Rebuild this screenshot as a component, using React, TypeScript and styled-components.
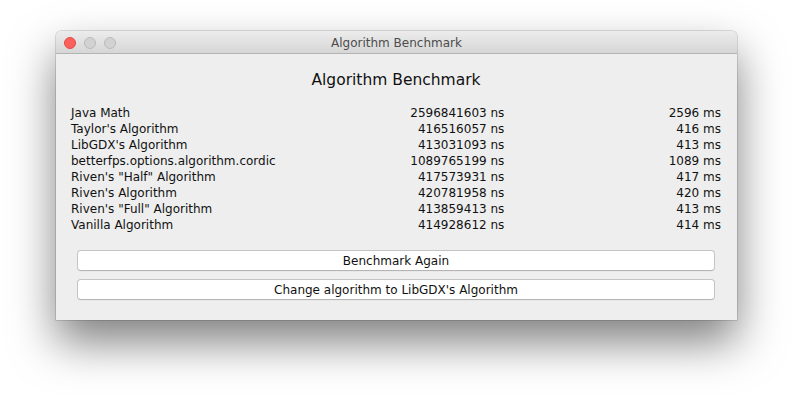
import React from 'react';
import styled, { createGlobalStyle } from 'styled-components';

const GlobalStyle = createGlobalStyle`
  html, body {
    margin: 0;
    padding: 0;
    background: #ffffff;
  }
  body {
    font-family: "DejaVu Sans", "Liberation Sans", sans-serif;
    -webkit-font-smoothing: antialiased;
  }
`;

// Desktop area holding the window
const Desktop = styled.div`
  width: 793px;
  height: 400px;
  padding: 31px 0 0 56px;
  box-sizing: border-box;
  overflow: hidden;
`;

const Window = styled.div`
  width: 681px;
  height: 289px;
  display: flex;
  flex-direction: column;
  border-radius: 5px 5px 0 0;
  background: #eeeeee;
  box-shadow: 0 0 0 0.5px rgba(0, 0, 0, 0.25), 0 22px 45px rgba(0, 0, 0, 0.5);
  overflow: hidden;
`;

const TitleBar = styled.div`
  height: 22px;
  flex: none;
  display: grid;
  grid-template-columns: 1fr auto 1fr;
  align-items: center;
  background: linear-gradient(#ececec, #d6d6d6);
  border-bottom: 1px solid #b4b4b4;
`;

const Lights = styled.div`
  display: flex;
  gap: 8px;
  padding-left: 8px;
`;

const Light = styled.span<{ $color: string; $border: string }>`
  width: 12px;
  height: 12px;
  border-radius: 50%;
  box-sizing: border-box;
  background: ${(p) => p.$color};
  border: 0.5px solid ${(p) => p.$border};
`;

const WindowTitle = styled.div`
  font-size: 12px;
  color: #4c4c4c;
  line-height: 22px;
  padding-top: 1px;
`;

const Content = styled.div`
  flex: 1;
  display: flex;
  flex-direction: column;
  padding: 16px 16px 0 15px;
`;

const Heading = styled.div`
  font-size: 15.5px;
  line-height: 20px;
  text-align: center;
  color: #111;
`;

const Results = styled.div`
  display: grid;
  grid-template-columns: repeat(3, 1fr);
  margin-top: 15px;
  font-size: 12px;
  line-height: 16px;
  color: #111;
`;

const Cell = styled.div<{ $right?: boolean }>`
  text-align: ${(p) => (p.$right ? 'right' : 'left')};
  white-space: nowrap;
`;

const Buttons = styled.div`
  display: flex;
  flex-direction: column;
  gap: 8px;
  margin-top: 17px;
  padding: 0 6px;
`;

const Button = styled.button`
  height: 21px;
  padding: 0;
  background: #ffffff;
  border: 1px solid #c4c4c4;
  border-bottom-color: #b4b4b4;
  border-radius: 4px;
  font-family: "DejaVu Sans", "Liberation Sans", sans-serif;
  font-size: 12px;
  color: #111;
  box-shadow: 0 0.5px 0 rgba(0, 0, 0, 0.05);
`;

const results = [
  { name: 'Java Math', ns: 2596841603, ms: 2596 },
  { name: "Taylor's Algorithm", ns: 416516057, ms: 416 },
  { name: "LibGDX's Algorithm", ns: 413031093, ms: 413 },
  { name: 'betterfps.options.algorithm.cordic', ns: 1089765199, ms: 1089 },
  { name: 'Riven\'s "Half" Algorithm', ns: 417573931, ms: 417 },
  { name: "Riven's Algorithm", ns: 420781958, ms: 420 },
  { name: 'Riven\'s "Full" Algorithm', ns: 413859413, ms: 413 },
  { name: 'Vanilla Algorithm', ns: 414928612, ms: 414 }
];

const App: React.FC = () => {
  return (
    <>
      <GlobalStyle />
      <Desktop>
        <Window>
          <TitleBar>
            <Lights>
              <Light $color='#fc605c' $border='#de4d48' />
              <Light $color='#d2d2d2' $border='#bcbcbc' />
              <Light $color='#d2d2d2' $border='#bcbcbc' />
            </Lights>
            <WindowTitle>Algorithm Benchmark</WindowTitle>
            <div />
          </TitleBar>
          <Content>
            <Heading>Algorithm Benchmark</Heading>
            <Results>
              {results.map((r) => (
                <React.Fragment key={r.name}>
                  <Cell>{r.name}</Cell>
                  <Cell $right>{r.ns} ns</Cell>
                  <Cell $right>{r.ms} ms</Cell>
                </React.Fragment>
              ))}
            </Results>
            <Buttons>
              <Button>Benchmark Again</Button>
              <Button>Change algorithm to LibGDX's Algorithm</Button>
            </Buttons>
          </Content>
        </Window>
      </Desktop>
    </>
  );
};

export default App;
